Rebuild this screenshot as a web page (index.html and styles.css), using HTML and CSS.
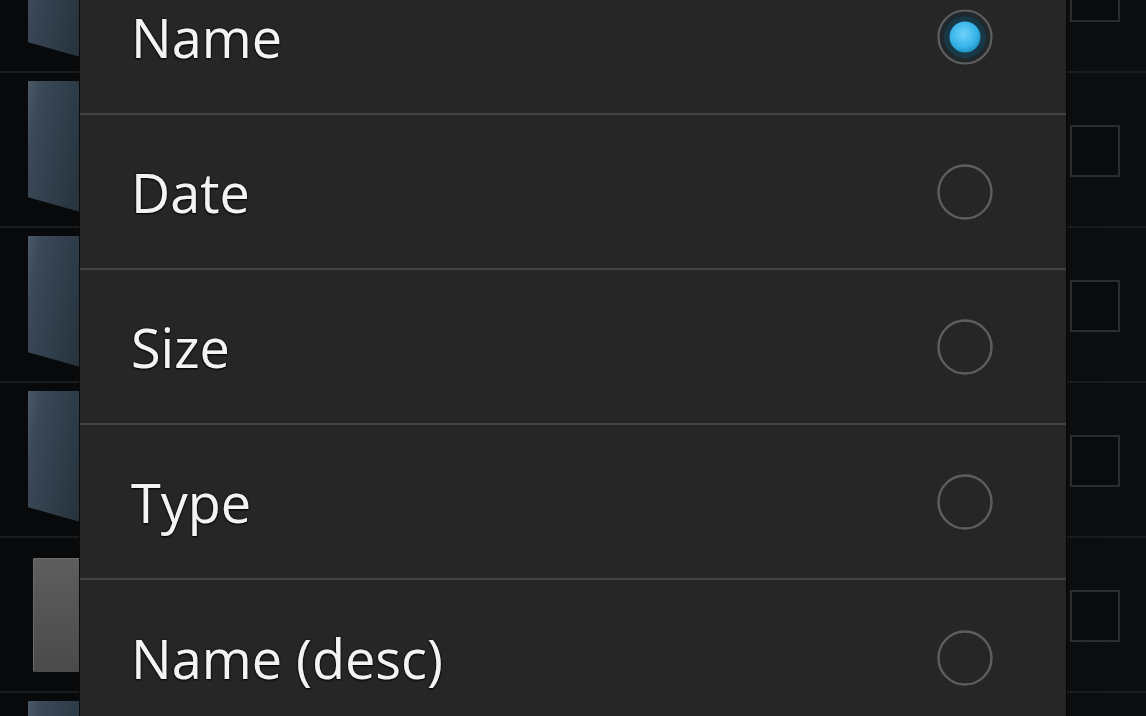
FILE: index.html
```html
<!DOCTYPE html>
<html lang="en">
<head>
<meta charset="utf-8">
<title>Sort by</title>
<link rel="stylesheet" href="styles.css">
</head>
<body>
<div class="screen">
  <ul class="files">
    <li class="file"><div class="thumb folder"></div><div class="check"></div></li>
    <li class="file"><div class="thumb folder"></div><div class="check"></div></li>
    <li class="file"><div class="thumb folder"></div><div class="check"></div></li>
    <li class="file"><div class="thumb folder"></div><div class="check"></div></li>
    <li class="file"><div class="thumb doc"></div><div class="check"></div></li>
    <li class="file"><div class="thumb folder"></div><div class="check"></div></li>
  </ul>

  <div class="dialog" role="radiogroup">
    <div class="option">
      <span class="label">Name</span>
      <svg class="radio" viewBox="0 0 56 56" aria-checked="true">
        <defs>
          <radialGradient id="dot" cx="45%" cy="40%" r="60%">
            <stop offset="0" stop-color="#6fd3fb"/>
            <stop offset="0.7" stop-color="#37b3e8"/>
            <stop offset="1" stop-color="#2392c4"/>
          </radialGradient>
        </defs>
        <circle cx="28" cy="28" r="26.5" fill="#20282c" stroke="#5e5e5e" stroke-width="2.2"/>
        <circle cx="28" cy="28" r="21" fill="#183848"/>
        <circle cx="28" cy="28" r="15.5" fill="url(#dot)"/>
      </svg>
    </div>
    <div class="option">
      <span class="label">Date</span>
      <svg class="radio" viewBox="0 0 56 56"><circle cx="28" cy="28" r="26.5" fill="none" stroke="#5e5e5e" stroke-width="2.4"/></svg>
    </div>
    <div class="option">
      <span class="label">Size</span>
      <svg class="radio" viewBox="0 0 56 56"><circle cx="28" cy="28" r="26.5" fill="none" stroke="#5e5e5e" stroke-width="2.4"/></svg>
    </div>
    <div class="option">
      <span class="label">Type</span>
      <svg class="radio" viewBox="0 0 56 56"><circle cx="28" cy="28" r="26.5" fill="none" stroke="#5e5e5e" stroke-width="2.4"/></svg>
    </div>
    <div class="option">
      <span class="label">Name (desc)</span>
      <svg class="radio" viewBox="0 0 56 56"><circle cx="28" cy="28" r="26.5" fill="none" stroke="#5e5e5e" stroke-width="2.4"/></svg>
    </div>
  </div>
</div>
</body>
</html>
```

FILE: styles.css
```css
* { box-sizing: border-box; }

html, body {
  margin: 0;
  padding: 0;
  background: #0b0c0d;
}

.screen {
  position: relative;
  width: 1146px;
  height: 716px;
  overflow: hidden;
  background: linear-gradient(90deg, #08090a 0%, #0b0c0d 60%, #0c0d0f 100%);
  font-family: "Open Sans", "Noto Sans", sans-serif;
}

/* background file list */
.files {
  list-style: none;
  margin: -82px 0 0 0;
  padding: 0;
}

.file {
  display: flex;
  align-items: flex-start;
  height: 155px;
  border-bottom: 2px solid #1a1b1d;
}

.thumb {
  margin-left: 28px;
  width: 56px;
}

.folder {
  margin-top: 8px;
  height: 132px;
  background: linear-gradient(100deg, #4a5a66 0%, #3a4955 18%, #2f3e4a 55%, #24313b 100%);
  clip-path: polygon(0 0, 100% 0, 100% 100%, 0 88%);
}

.doc {
  margin-top: 20px;
  margin-left: 33px;
  width: 52px;
  height: 114px;
  border-radius: 2px 0 0 2px;
  background: linear-gradient(180deg, #5e5e5e 0%, #545454 50%, #4a4a4a 100%);
  box-shadow: inset 1px 1px 0 #6c6c6c;
}

.check {
  margin-left: auto;
  margin-right: 26px;
  margin-top: 52px;
  width: 50px;
  height: 52px;
  border: 2px solid #2b2c2e;
  background: #0a0b0c;
}

/* sort dialog */
.dialog {
  position: absolute;
  left: 80px;
  top: -40px;
  width: 986px;
  background: #262626;
  box-shadow: 1px 0 0 #050505, -1px 0 0 #0a0a0a;
}

.option {
  display: flex;
  align-items: center;
  justify-content: space-between;
  height: 155px;
  padding-left: 51px;
  padding-right: 73px;
  border-bottom: 2px solid #434343;
}

.option:last-child {
  border-bottom: none;
}

.label {
  color: #f3f3f3;
  font-size: 54px;
  letter-spacing: 0;
  text-shadow: 0 0 2px #000, 0 1px 2px #000, 0 0 0.4px #f3f3f3;
}

.radio {
  width: 56px;
  height: 56px;
  display: block;
}
```
